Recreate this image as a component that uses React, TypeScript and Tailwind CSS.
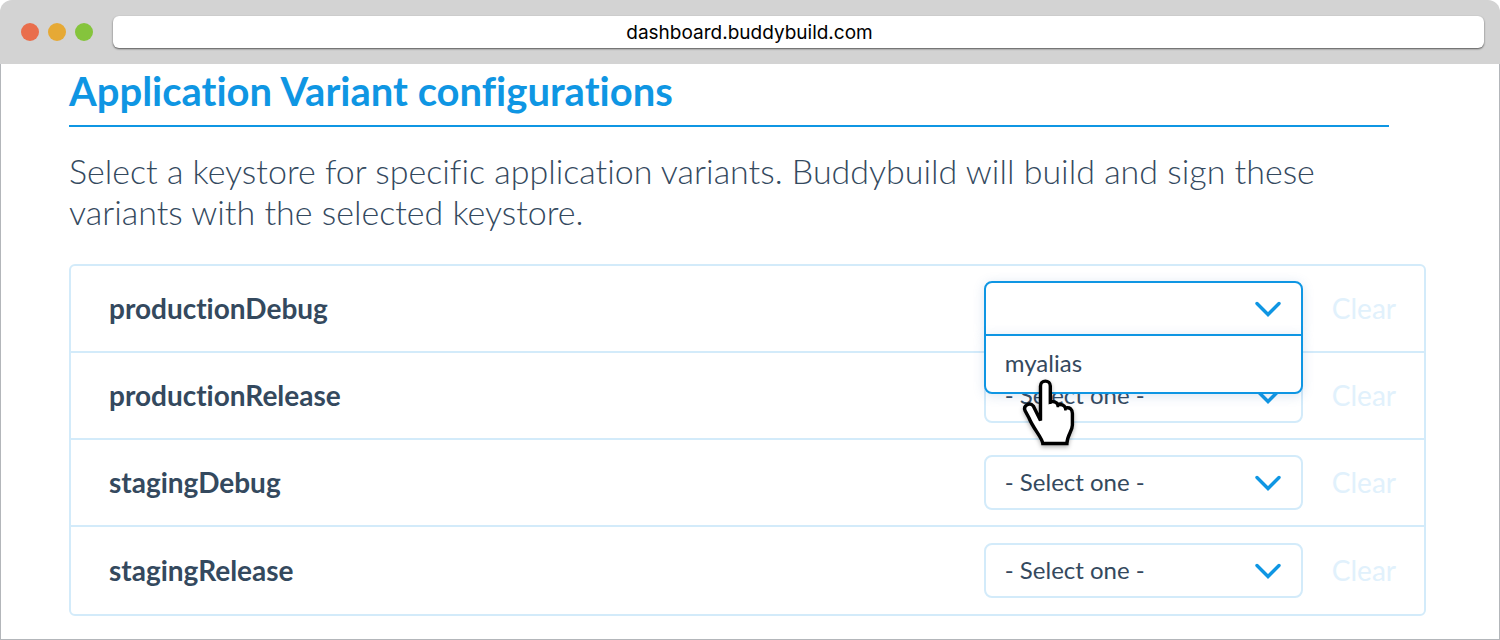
import { useState } from "react";

const variants = ["productionDebug", "productionRelease", "stagingDebug", "stagingRelease"];
const aliases = ["myalias"];

function Chevron() {
  return (
    <svg
      className="pointer-events-none absolute top-5 right-[21px] h-4 w-7"
      viewBox="0 0 28 16"
      fill="none"
      stroke="#0f96e3"
      strokeWidth="3.4"
      strokeLinecap="round"
      aria-hidden="true"
    >
      <path d="M3 2.500 14 13.500 25 2.500" />
    </svg>
  );
}

function HandCursor() {
  return (
    <svg
      className="pointer-events-none absolute top-10 left-9 z-20 h-[72px] w-14 drop-shadow-[0_2px_2px_rgba(0,0,0,0.3)]"
      viewBox="0 0 56 72"
      fill="#fff"
      stroke="#000"
      strokeWidth="3.4"
      aria-hidden="true"
    >
      <path d="M20.500 46.500V12a4.900 4.900 0 0 1 9.800 0V28c2.500-.9 6.500-.2 7.600 2.800 3-1 6.500.3 7.500 3.200 4.500-1.200 7 1.300 7 5.600V51c0 6-5.300 10-5.500 18.500H22.800C22 63.500 13.500 55 9 44L5 36.500c-2-5.500 5-8.500 8.300-4.500Z" />
      <path d="M30.300 28V30M37.900 30.800v2.500M45.400 34v2.500" strokeWidth="2.500" />
    </svg>
  );
}

function VariantRow({ name, initiallyOpen }: { name: string; initiallyOpen: boolean }) {
  const [alias, setAlias] = useState("");
  const [open, setOpen] = useState(initiallyOpen);

  return (
    <li className="flex h-[87px] items-center border-b-2 border-[#d3ebfa] pr-7 pl-[38px] last:border-b-0">
      <label htmlFor={name} className="flex-1 pb-0.5 text-[28px] font-bold">
        {name}
      </label>
      <div className={open ? "relative z-10 w-[319px] rounded-lg shadow-[0_2px_12px_rgba(60,110,180,0.18)]" : "relative w-[319px]"}>
        <select
          id={name}
          value={alias}
          onChange={(event) => {
            setAlias(event.target.value);
            setOpen(false);
          }}
          className={
            open
              ? "block h-[55px] w-full appearance-none rounded-t-lg border-2 border-[#0f96e3] bg-white px-[19px] pb-0.5 text-[24px] outline-none"
              : "block h-[55px] w-full appearance-none rounded-lg border-2 border-[#d3ebfa] bg-white px-[19px] pb-0.5 text-[24px] outline-none"
          }
        >
          <option value="">{open ? "" : "- Select one -"}</option>
          {aliases.map((item) => (
            <option key={item}>{item}</option>
          ))}
        </select>
        <Chevron />
        {open && (
          <div className="absolute top-[53px] left-0 w-full">
            <ul className="rounded-b-lg border-2 border-[#0f96e3] bg-white shadow-[0_2px_12px_rgba(60,110,180,0.18)]">
              {aliases.map((item) => (
                <li key={item}>
                  <button
                    type="button"
                    className="block h-14 w-full px-[19px] pb-0.5 text-left text-[24px]"
                    onClick={() => {
                      setAlias(item);
                      setOpen(false);
                    }}
                  >
                    {item}
                  </button>
                </li>
              ))}
            </ul>
            <HandCursor />
          </div>
        )}
      </div>
      <button type="button" className="ml-[29px] pb-0.5 text-[28px] text-[#e1f1fc]" onClick={() => setAlias("")}>
        Clear
      </button>
    </li>
  );
}

export default function App() {
  return (
    <div className="flex min-h-screen flex-col bg-white font-['Lato',sans-serif] text-[#34495e] [font-variant-ligatures:none]">
      <header className="flex h-16 items-center gap-5 rounded-t-xl bg-[#d3d3d3] pr-4 pl-[21px]">
        <div className="flex gap-[9px]">
          <span className="size-[18px] rounded-full bg-[#e96e4c]" />
          <span className="size-[18px] rounded-full bg-[#e6a935]" />
          <span className="size-[18px] rounded-full bg-[#85c43c]" />
        </div>
        <input
          aria-label="Address"
          defaultValue="dashboard.buddybuild.com"
          className="h-8 min-w-0 flex-1 rounded-md bg-white pr-[98px] text-center font-['Inter',sans-serif] text-[19px] text-black shadow-[0_1px_2px_rgba(0,0,0,0.6)] outline-none"
        />
      </header>
      <main className="flex-1 border-x border-b border-[#b3b6ba] pr-[73px] pb-5 pl-[68px]">
        <h1 className="mr-[37px] border-b-2 border-[#0f96e3] pt-0.5 pb-2 text-[40px] leading-[51px] font-bold text-[#0f96e3]">
          Application Variant configurations
        </h1>
        <p className="mt-[23px] mr-[37px] text-[34px] leading-[41px] font-light">
          Select a keystore for specific application variants. Buddybuild will build and sign these variants with the
          selected keystore.
        </p>
        <ul className="mt-8 rounded-md border-2 border-[#d3ebfa]">
          {variants.map((name, index) => (
            <VariantRow key={name} name={name} initiallyOpen={index === 0} />
          ))}
        </ul>
      </main>
    </div>
  );
}
